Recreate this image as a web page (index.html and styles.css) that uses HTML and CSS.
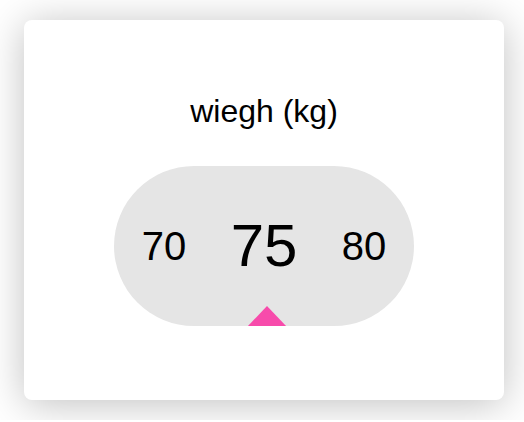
FILE: index.html
```html
<!DOCTYPE html>
<html>
	<head>
		<meta charset="UTF-8">
		<title>wiegh picker</title>
		<link rel="stylesheet" href="styles.css">
	</head>
	<body>
		<div class="card">
			<h2 class="title">wiegh (kg)</h2>
			<div class="picker">
				<span class="num">70</span>
				<span class="num cur">75</span>
				<span class="num">80</span>
				<i class="mark"></i>
			</div>
		</div>
	</body>
</html>
```

FILE: styles.css
```css
*{padding: 0;margin: 0;}
body{
	background: #fff;
	font-family: "Liberation Sans", Arial, sans-serif;
	color: #000;
}
.card{
	width: 480px;height: 380px;
	margin: 20px 24px;
	padding-top: 73px;
	box-sizing: border-box;
	background: #fff;
	border-radius: 8px;
	box-shadow: 0 4px 40px rgba(0,0,0,0.25);
	display: flex;
	flex-direction: column;
	align-items: center;
}
.title{
	font-size: 32px;
	font-weight: normal;
	line-height: 36px;
}
.picker{
	position: relative;
	margin-top: 37px;
	width: 300px;height: 160px;
	border-radius: 80px;
	background: #e5e5e5;
	overflow: hidden;
	display: flex;
	align-items: center;
}
.num{
	width: 100px;
	text-align: center;
	font-size: 40px;
	line-height: 1;
}
.cur{font-size: 60px;}
.mark{
	position: absolute;
	left: 133px;bottom: -1px;
	width: 0;height: 0;
	border-left: 20px solid transparent;
	border-right: 20px solid transparent;
	border-bottom: 21px solid #f74bab;
}
```
